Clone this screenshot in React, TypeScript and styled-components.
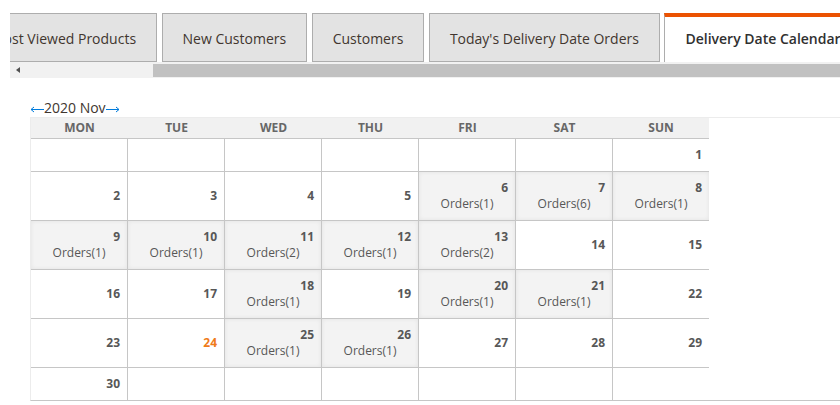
import React from "react";
import styled, { createGlobalStyle } from "styled-components";

const Global = createGlobalStyle`
  html, body { margin: 0; padding: 0; background: #fff; overflow: hidden; }
  body { font-family: "Open Sans", "Noto Sans", sans-serif; }
  * { box-sizing: border-box; }
`;

const Page = styled.div`
  width: 840px;
  height: 405px;
  padding-top: 13px;
  overflow: hidden;
`;

const TabsArea = styled.div`
  margin-left: 10px;
  overflow: hidden;
`;

const TabList = styled.div`
  display: flex;
  gap: 4.5px;
  margin-left: -40px;
  white-space: nowrap;
`;

const Tab = styled.div<{ $active?: boolean }>`
  flex-shrink: 0;
  font-size: 14px;
  line-height: 19px;
  padding: ${(p) => (p.$active ? "12px 20px 14px" : "15px 20px 13px")};
  border: 1px solid #adadad;
  border-top: ${(p) => (p.$active ? "4px solid #eb5202" : "1px solid #adadad")};
  border-bottom: ${(p) => (p.$active ? "none" : "1px solid #adadad")};
  background: ${(p) => (p.$active ? "#ffffff" : "#e3e3e3")};
  color: ${(p) => (p.$active ? "#303030" : "#41362f")};
  font-weight: ${(p) => (p.$active ? 600 : 400)};
`;

const ScrollTrack = styled.div`
  display: flex;
  align-items: flex-start;
  height: 16px;
  background: #f1f1f1;
`;

const ScrollButton = styled.div`
  width: 16px;
  height: 16px;
  display: flex;
  align-items: center;
  justify-content: center;
  &::before {
    content: "";
    width: 0;
    height: 0;
    border-top: 3px solid transparent;
    border-bottom: 3px solid transparent;
    border-right: 4px solid #505050;
  }
`;

const ScrollThumb = styled.div<{ $offset: number }>`
  flex: 1;
  height: 13px;
  margin-top: 2px;
  margin-left: ${(p) => p.$offset}px;
  background: #c1c1c1;
`;

const CalendarSection = styled.div`
  margin-top: 20px;
  padding-left: 30px;
`;

const MonthNav = styled.div`
  font-size: 14px;
  line-height: 19px;
  height: 19px;
  color: #41362f;
  display: flex;
  align-items: flex-start;
`;

const NavArrow = styled.a`
  display: block;
  width: 14px;
  height: 7px;
  margin-top: 8px;
  color: #007bdb;
  cursor: pointer;
  svg { display: block; }
`;

const CalendarBox = styled.div`
  margin-right: -20px;
  border: 1px solid #ececec;
  border-bottom-color: #c6c6c6;
  border-right: none;
  background: #fff;
`;

const Grid = styled.div`
  display: grid;
  grid-template-columns: repeat(6, 97px) 96px;
`;

const HeadCell = styled.div`
  height: 21px;
  line-height: 20px;
  text-align: center;
  font-size: 12px;
  font-weight: 700;
  color: #676767;
  background: #f1f1f1;
  border-bottom: 1px solid #c6c6c6;
`;

const DayCell = styled.div<{ $hasOrders?: boolean; $lastCol?: boolean; $lastRow?: boolean }>`
  display: flex;
  flex-direction: column;
  justify-content: center;
  padding: 8px 7px;
  border-right: ${(p) => (p.$lastCol ? "none" : "1px solid #c6c6c6")};
  border-bottom: ${(p) => (p.$lastRow ? "none" : "1px solid #c6c6c6")};
  background: ${(p) => (p.$hasOrders ? "#f3f3f3" : "#ffffff")};
  box-shadow: ${(p) => (p.$hasOrders ? "inset 0 0 4px rgba(0,0,0,0.07)" : "none")};
  min-height: 32px;
`;

const DayNumber = styled.div<{ $today?: boolean }>`
  text-align: right;
  font-size: 12px;
  line-height: 16px;
  font-weight: 700;
  color: ${(p) => (p.$today ? "#ef7b1a" : "#575757")};
`;

const Orders = styled.div`
  text-align: center;
  font-size: 12px;
  line-height: 16px;
  color: #575757;
`;

const ArrowIcon = ({ dir }: { dir: "left" | "right" }) => (
  <svg width="14" height="7" viewBox="0 0 14 7" fill="none" stroke="currentColor" strokeWidth="1">
    {dir === "left" ? (
      <path d="M1 3.5H14M4 1L1 3.5L4 6" />
    ) : (
      <path d="M0 3.5H13M10 1L13 3.5L10 6" />
    )}
  </svg>
);

const tabs = [
  "Most Viewed Products",
  "New Customers",
  "Customers",
  "Today's Delivery Date Orders",
  "Delivery Date Calendar",
];

const days = ["MON", "TUE", "WED", "THU", "FRI", "SAT", "SUN"];

const orders: Record<number, number> = {
  6: 1, 7: 6, 8: 1, 9: 1, 10: 1, 11: 2, 12: 1, 13: 2,
  18: 1, 20: 1, 21: 1, 25: 1, 26: 1,
};

const TODAY = 24;

export default function App() {
  const cells: (number | null)[] = [];
  for (let i = 0; i < 6; i++) cells.push(null);
  for (let d = 1; d <= 30; d++) cells.push(d);
  while (cells.length % 7 !== 0) cells.push(null);
  const rowCount = cells.length / 7;

  return (
    <Page>
      <Global />
      <TabsArea>
        <TabList>
          {tabs.map((t, i) => (
            <Tab key={t} $active={i === tabs.length - 1}>
              {t}
            </Tab>
          ))}
        </TabList>
        <ScrollTrack>
          <ScrollButton />
          <ScrollThumb $offset={127} />
        </ScrollTrack>
      </TabsArea>
      <CalendarSection>
        <MonthNav>
          <NavArrow aria-label="Previous month">
            <ArrowIcon dir="left" />
          </NavArrow>
          <span>2020 Nov</span>
          <NavArrow aria-label="Next month">
            <ArrowIcon dir="right" />
          </NavArrow>
        </MonthNav>
        <CalendarBox>
          <Grid>
            {days.map((d) => (
              <HeadCell key={d}>{d}</HeadCell>
            ))}
            {cells.map((d, i) => {
              const col = i % 7;
              const row = Math.floor(i / 7);
              const count = d !== null ? orders[d] : undefined;
              return (
                <DayCell
                  key={i}
                  $hasOrders={!!count}
                  $lastCol={col === 6}
                  $lastRow={row === rowCount - 1}
                >
                  {d !== null && <DayNumber $today={d === TODAY}>{d}</DayNumber>}
                  {count ? <Orders>Orders({count})</Orders> : null}
                </DayCell>
              );
            })}
          </Grid>
        </CalendarBox>
      </CalendarSection>
    </Page>
  );
}
